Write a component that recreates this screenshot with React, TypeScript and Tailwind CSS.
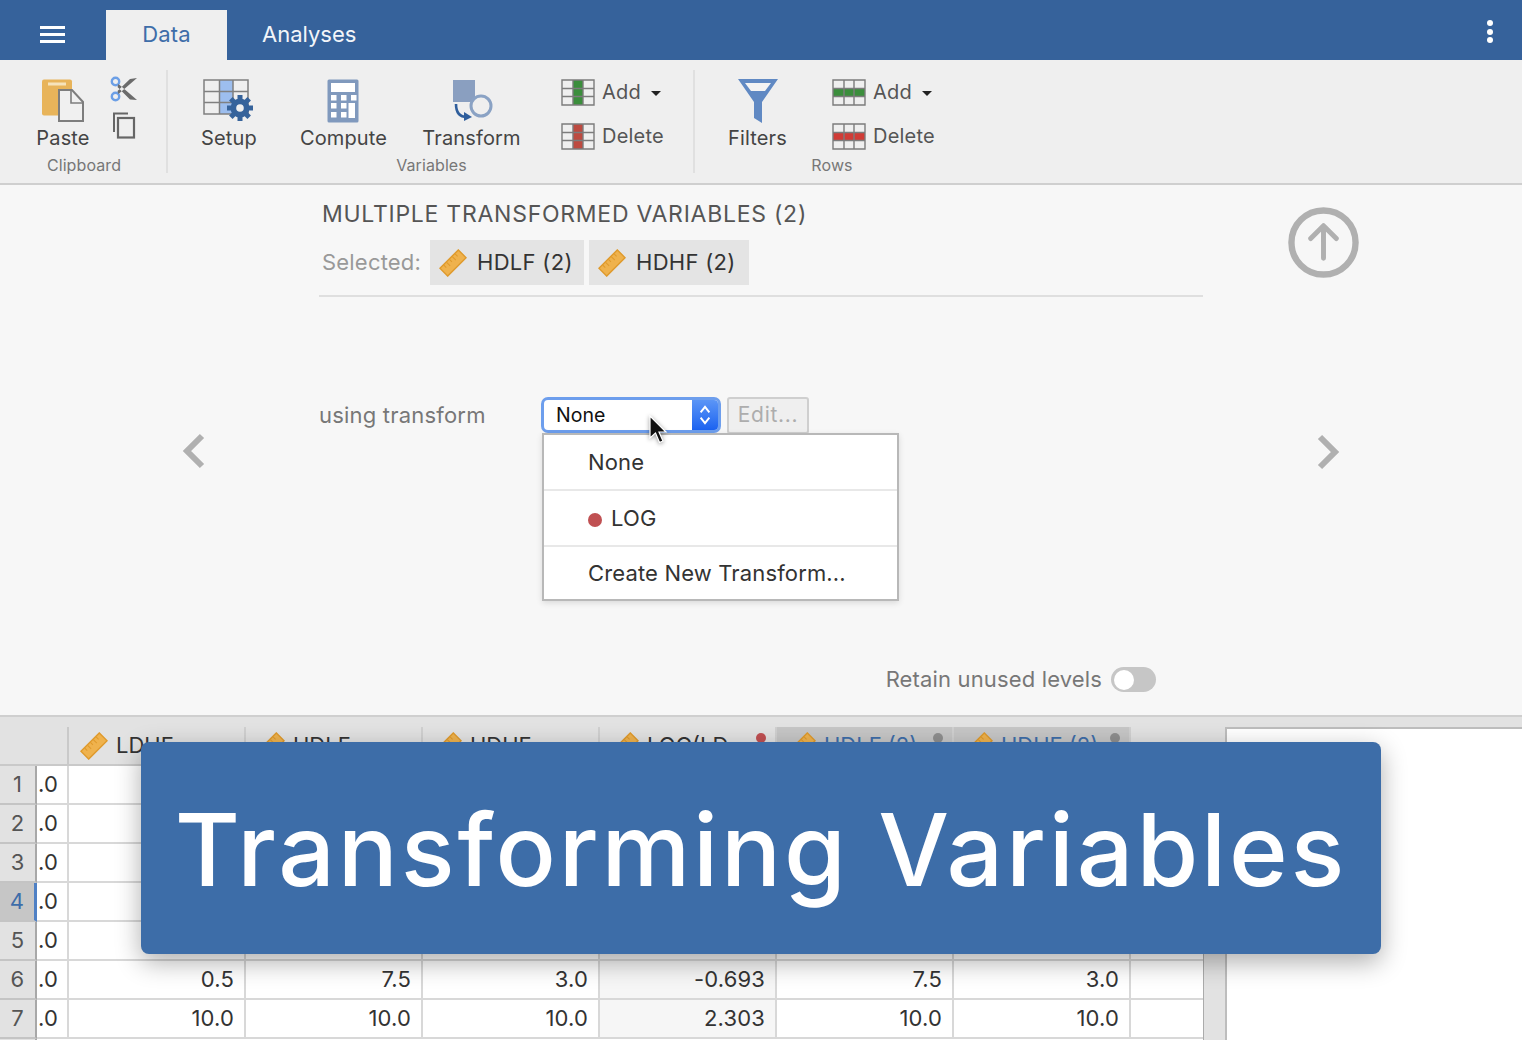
import React from "react";

const font = "[font-family:Inter,'Liberation_Sans',sans-serif]";

function Ruler({ className = "" }: { className?: string }) {
  return (
    <svg viewBox="0 0 28 28" className={className}>
      <g transform="rotate(-45 14 14)">
        <rect x="1" y="8.5" width="26" height="11" fill="#efb24d" stroke="#df9a2c" strokeWidth="1.4" />
        <path d="M6 9v3.5M10 9v5M14 9v3.5M18 9v5M22 9v3.5" stroke="#df9a2c" strokeWidth="1" fill="none" />
      </g>
    </svg>
  );
}

function PasteIcon() {
  return (
    <svg viewBox="0 0 44 44" className="w-[44px] h-[44px] ml-[1px]">
      <rect x="0" y="0.5" width="30" height="36" rx="2" fill="#e8b45a" />
      <rect x="6" y="3.5" width="18" height="3" fill="#f6e3bb" />
      <path d="M17 11h13l11 12v19H17z" fill="#f0f0f0" stroke="#7d7d7d" strokeWidth="2" />
      <path d="M29 11v13h12" fill="none" stroke="#7d7d7d" strokeWidth="1.6" />
    </svg>
  );
}

function CutIcon() {
  return (
    <svg viewBox="0 0 28 26" className="w-[28px] h-[26px]">
      <circle cx="5.5" cy="5.5" r="3.7" fill="none" stroke="#6c9fe6" strokeWidth="2.4" />
      <circle cx="5.5" cy="20.5" r="3.7" fill="none" stroke="#6c9fe6" strokeWidth="2.4" />
      <path d="M8.5 8 27 24l-7-.5L7.500 11zM8.500 18 27 2l-7 1L7.500 15z" fill="#6b6b6b" />
    </svg>
  );
}

function CopyIcon() {
  return (
    <svg viewBox="0 0 24 27" className="w-[24px] h-[27px]">
      <path d="M2 20V1.500h14" fill="none" stroke="#666" strokeWidth="2" />
      <rect x="6" y="6" width="16" height="19.500" fill="none" stroke="#666" strokeWidth="2.200" />
    </svg>
  );
}

function SetupIcon() {
  return (
    <svg viewBox="0 0 52 44" className="w-[52px] h-[44px]">
      <rect x="16.500" y="1" width="13.500" height="34" fill="#9dbeee" />
      <path d="M1 1h44v34H1zM1 12.500h44M1 23.500h44M16.500 1v34M30 1v34" fill="none" stroke="#808080" strokeWidth="1.500" />
      <g transform="translate(37 29)">
        <circle r="9.500" fill="#36639b" />
        {[0, 45, 90, 135, 180, 225, 270, 315].map((a) => (
          <rect key={a} x="-2.500" y="-13" width="5" height="6" fill="#36639b" transform={`rotate(${a})`} />
        ))}
        <circle r="3.800" fill="#efefef" />
      </g>
    </svg>
  );
}

function ComputeIcon() {
  return (
    <svg viewBox="0 0 32 44" className="w-[32px] h-[44px] -ml-[2px]">
      <rect x="0.500" y="0.500" width="31" height="43" rx="1.500" fill="#8099bd" />
      <rect x="4" y="4" width="24" height="9" fill="#fff" />
      {[4, 14, 24].flatMap((x, i) =>
        [16, 24, 33].filter((y) => !(i === 2 && y > 16)).map((y) => (
          <rect key={`${x}-${y}`} x={x} y={y} width="5.500" height="5.500" fill="#fff" />
        ))
      )}
      <rect x="21.500" y="24" width="6.500" height="15" fill="#fff" />
    </svg>
  );
}

function TransformIcon() {
  return (
    <svg viewBox="0 0 42 44" className="w-[42px] h-[44px] ml-[2px]">
      <path d="M1 1h22v19l-4.500 3H1z" fill="#8a9fc0" />
      <circle cx="29" cy="27" r="10" fill="none" stroke="#8aa2c4" strokeWidth="3" />
      <path d="M4 25c0 8 3 13 11 13" fill="none" stroke="#2f5e9c" strokeWidth="2.600" />
      <path d="M12 33l8 5-8 4z" fill="#2f5e9c" />
    </svg>
  );
}

function GridIcon({ color, mode }: { color: string; mode: "col" | "row" }) {
  return (
    <svg viewBox="0 0 34 27" className="w-[34px] h-[27px]">
      {mode === "col" ? (
        <rect x="12" y="1" width="10" height="25" fill={color} />
      ) : (
        <rect x="1" y="10" width="32" height="8" fill={color} />
      )}
      <path d="M1 1h32v25H1zM1 9.500h32M1 17.500h32M12 1v25M22 1v25" fill="none" stroke="#7c7c7c" strokeWidth="1.400" />
    </svg>
  );
}

function FilterIcon() {
  return (
    <svg viewBox="0 0 40 44" className="w-[40px] h-[44px]">
      <path d="M0 0h40L24 23v21l-8-5V23z" fill="#6089c3" />
      <path d="M7 4h26l-6 8H13z" fill="#f3f3f3" />
    </svg>
  );
}

function Caret() {
  return <span className="ml-[3px] mt-[1px] w-0 h-0 border-x-[5px] border-x-transparent border-t-[5px] border-t-[#222]" />;
}

function Big({ icon, label, width }: { icon: React.ReactNode; label: string; width: string }) {
  return (
    <div className={`${width} flex flex-col items-center`}>
      <div className="h-[44px] flex items-center justify-center">{icon}</div>
      <div className="mt-[3px] text-[20px] leading-[24px] tracking-[0.15px] text-[#444] whitespace-nowrap">{label}</div>
    </div>
  );
}

function Small({ icon, label, caret }: { icon: React.ReactNode; label: string; caret?: boolean }) {
  return (
    <div className="h-[27px] flex items-center gap-[7px]">
      {icon}
      <span className="text-[20px] leading-[24px] tracking-[0.2px] text-[#555] -mt-[1px]">{label}</span>
      {caret && <Caret />}
    </div>
  );
}

function GroupLabel({ children }: { children: string }) {
  return <div className="-mb-[2px] pl-[2px] text-center text-[16px] leading-[20px] tracking-[0.1px] text-[#777]">{children}</div>;
}

function Ribbon() {
  return (
    <div className="h-[125px] bg-[#efefef] border-b-2 border-[#cfcfcf] flex">
      <div className="w-[168px] h-[103px] mt-[10px] border-r-2 border-[#e0e0e0] flex flex-col justify-between">
        <div className="flex pl-[33px] pt-[9px]">
          <Big width="w-[60px]" icon={<PasteIcon />} label="Paste" />
          <div className="ml-[17px] -mt-[3px] flex flex-col gap-[10px] items-start">
            <CutIcon />
            <div className="ml-[2px]"><CopyIcon /></div>
          </div>
        </div>
        <GroupLabel>Clipboard</GroupLabel>
      </div>
      <div className="w-[527px] h-[103px] mt-[10px] border-r-2 border-[#e0e0e0] flex flex-col justify-between">
        <div className="flex pl-[33px] pt-[9px]">
          <Big width="w-[56px]" icon={<SetupIcon />} label="Setup" />
          <Big width="w-[87px] ml-[43px]" icon={<ComputeIcon />} label="Compute" />
          <Big width="w-[97px] ml-[36px]" icon={<TransformIcon />} label="Transform" />
          <div className="ml-[41px] flex flex-col gap-[17px]">
            <Small icon={<GridIcon color="#3b8e3c" mode="col" />} label="Add" caret />
            <Small icon={<GridIcon color="#bd4a40" mode="col" />} label="Delete" />
          </div>
        </div>
        <GroupLabel>Variables</GroupLabel>
      </div>
      <div className="w-[272px] h-[103px] mt-[10px] flex flex-col justify-between">
        <div className="flex pl-[33px] pt-[9px]">
          <Big width="w-[59px]" icon={<FilterIcon />} label="Filters" />
          <div className="ml-[45px] flex flex-col gap-[17px]">
            <Small icon={<GridIcon color="#3b8e3c" mode="row" />} label="Add" caret />
            <Small icon={<GridIcon color="#d03b36" mode="row" />} label="Delete" />
          </div>
        </div>
        <GroupLabel>Rows</GroupLabel>
      </div>
    </div>
  );
}

function Header() {
  return (
    <div className="h-[60px] bg-[#36629b] flex items-end">
      <div className="ml-[40px] mb-[17px] w-[25px] flex flex-col gap-[4px]">
        <div className="h-[3px] bg-white" />
        <div className="h-[3px] bg-white" />
        <div className="h-[3px] bg-white" />
      </div>
      <div className="ml-[41px] w-[121px] h-[50px] pb-[2px] bg-[#efefef] text-[#3e6da9] text-[22px] tracking-[0.1px] flex items-center justify-center">Data</div>
      <div className="ml-[35px] h-[50px] pb-[2px] text-[#f2f5f9] text-[22px] flex items-center">Analyses</div>
      <div className="ml-auto mr-[29px] mb-[17px] flex flex-col gap-[2.500px]">
        <div className="w-[6px] h-[6px] rounded-full bg-white" />
        <div className="w-[6px] h-[6px] rounded-full bg-white" />
        <div className="w-[6px] h-[6px] rounded-full bg-white" />
      </div>
    </div>
  );
}

function Chip({ label, w }: { label: string; w: string }) {
  return (
    <div className={`${w} h-[45px] bg-[#e4e4e4] flex items-center pl-[9px] gap-[10px] text-[22px] tracking-[0.3px] text-[#333]`}>
      <Ruler className="w-[28px] h-[28px] shrink-0" />
      <span>{label}</span>
    </div>
  );
}

function Cursor() {
  return (
    <svg viewBox="0 0 20 30" className="absolute left-[648px] top-[415px] w-[20px] h-[30px] drop-shadow-[0_1px_2px_rgba(0,0,0,0.4)] z-30">
      <path d="M2 1v22l5.500-5 4 9.500 3.500-1.500-4-9h7z" fill="#111" stroke="#fff" strokeWidth="1.200" />
    </svg>
  );
}

function Editor() {
  return (
    <div className="h-[530px] bg-[#f7f7f7] grid grid-cols-[319px_884px_319px]">
      <div className="flex items-start justify-end pr-[113px] pt-[248px]">
        <svg viewBox="0 0 24 36" className="w-[24px] h-[36px]">
          <path d="M20 3 5 18l15 15" fill="none" stroke="#b0b0b0" strokeWidth="6" />
        </svg>
      </div>
      <div className="flex flex-col">
        <div className="pl-[3px] pt-[13px] text-[23px] leading-[32px] tracking-[0.74px] text-[#555]">MULTIPLE TRANSFORMED VARIABLES (2)</div>
        <div className="mt-[10px] pl-[3px] flex items-center">
          <span className="text-[22px] tracking-[0.2px] text-[#999] w-[108px]">Selected:</span>
          <Chip label="HDLF (2)" w="w-[154px]" />
          <div className="w-[5px]" />
          <Chip label="HDHF (2)" w="w-[160px]" />
        </div>
        <div className="mt-[10px] h-[2px] bg-[#dfdfdf]" />
        <div className="mt-[99px] flex items-center h-[38px]">
          <span className="w-[222px] text-[22px] tracking-[0.2px] text-[#777]">using transform</span>
          <div className="w-[180px] h-[36px] rounded-[7px] border-[3px] border-[#6d9eed] bg-white flex items-stretch overflow-hidden">
            <span className="flex-1 pl-[12px] text-[19.500px] leading-[31px] text-[#111]">None</span>
            <div className="w-[26px] bg-gradient-to-b from-[#5b95f6] to-[#1b62f0] flex items-center justify-center">
              <svg viewBox="0 0 12 22" className="w-[14px] h-[24px]">
                <path d="M2 8.500 6 3.500l4 5M2 13.500l4 5 4-5" fill="none" stroke="#fff" strokeWidth="1.800" />
              </svg>
            </div>
          </div>
          <div className="ml-[6px] w-[82px] h-[37px] rounded-[3px] border-2 border-[#cfcfcf] bg-[#efefef] text-[21px] tracking-[0.7px] text-[#adadad] flex items-center justify-center">Edit...</div>
        </div>
        <div className="mt-[229px] flex items-center justify-end pr-[47px] gap-[9px]">
          <span className="text-[22px] tracking-[0.15px] text-[#777]">Retain unused levels</span>
          <div className="w-[45px] h-[25px] rounded-full bg-[#c6c6c6] flex items-center pl-[3px]">
            <div className="w-[20px] h-[20px] rounded-full bg-white" />
          </div>
        </div>
      </div>
      <div className="flex flex-col">
        <div className="pl-[85px] pt-[22px]">
          <svg viewBox="0 0 72 72" className="w-[71px] h-[71px]">
            <circle cx="36" cy="36" r="32.500" fill="none" stroke="#b0b0b0" strokeWidth="6.500" />
            <path d="M36 52V20M23 32l13-13 13 13" fill="none" stroke="#b0b0b0" strokeWidth="5" strokeLinecap="round" strokeLinejoin="round" />
          </svg>
        </div>
        <div className="pl-[113px] mt-[156px]">
          <svg viewBox="0 0 24 36" className="w-[24px] h-[36px]">
            <path d="M4 3l15 15L4 33" fill="none" stroke="#b0b0b0" strokeWidth="6" />
          </svg>
        </div>
      </div>
    </div>
  );
}

function Dropdown() {
  return (
    <div className="absolute left-[542px] top-[433px] w-[357px] h-[168px] bg-white border-2 border-[#b8b8b8] shadow-[0_2px_6px_rgba(0,0,0,0.12)] text-[22px] tracking-[0.15px] text-[#333] z-20 flex flex-col">
      <div className="h-[56px] flex items-center pl-[44px] border-b-2 border-[#e8e8e8]">None</div>
      <div className="h-[56px] flex items-center pl-[44px] border-b-2 border-[#e8e8e8]">
        <span className="w-[14px] h-[14px] rounded-full bg-[#c05052] mr-[9px] mt-[3px]" />LOG
      </div>
      <div className="flex-1 flex items-center pl-[44px]">Create New Transform...</div>
    </div>
  );
}

const columns = [
  { name: "LDHF" },
  { name: "HDLF" },
  { name: "HDHF" },
  { name: "LOG(LD", dot: "#c05052" },
  { name: "HDLF (2)", dot: "#8f8f8f", sel: true },
  { name: "HDHF (2)", dot: "#8f8f8f", sel: true },
];

const rows: string[][] = [
  ["", "", "", "", "", ""],
  ["", "", "", "", "", ""],
  ["", "", "", "", "", ""],
  ["", "", "", "", "", ""],
  ["", "", "", "", "", ""],
  ["0.5", "7.5", "3.0", "-0.693", "7.5", "3.0"],
  ["10.0", "10.0", "10.0", "2.303", "10.0", "10.0"],
];

function DataTable() {
  return (
    <div className="h-[325px] border-t-2 border-[#cfcfcf] bg-[#e2e2e2] flex overflow-hidden">
      <div className="w-[1203px] shrink-0 flex flex-col pt-[10px]">
        <div className="h-[39px] flex border-b-2 border-[#c9c9c9] shrink-0">
          <div className="w-[69px] border-r-2 border-[#c9c9c9]" />
          {columns.map((c) => (
            <div
              key={c.name}
              className={`w-[177px] relative flex items-center gap-[8px] pl-[11px] border-r-2 border-[#d0d0d0] overflow-hidden text-[22px] ${c.sel ? "bg-[#c6c6c6] text-[#3e6da9]" : "text-[#333]"}`}
            >
              <Ruler className="w-[28px] h-[28px] shrink-0" />
              <span className="whitespace-nowrap">{c.name}</span>
              {c.dot && <span className="absolute right-[9px] top-[6px] w-[10px] h-[10px] rounded-full" style={{ background: c.dot }} />}
            </div>
          ))}
        </div>
        {rows.map((r, i) => (
          <div key={i} className="h-[39px] flex shrink-0 text-[22px] tracking-[0.15px] text-[#333]">
            <div className={`w-[37px] shrink-0 flex items-center justify-center border-b-2 border-[#c4c4c4] ${i === 3 ? "bg-[#c6c6c6] text-[#3e6da9] border-r-[3px] border-r-[#4f80c4]" : "bg-[#e2e2e2] text-[#555] border-r-2 border-r-[#a8a8a8]"}`}>
              {i + 1}
            </div>
            <div className="w-[32px] shrink-0 bg-white border-r-2 border-b-2 border-[#d8d8d8] flex items-center pl-[1px]">.0</div>
            {r.map((v, j) => (
              <div key={j} className={`w-[177px] shrink-0 border-r-2 border-b-2 border-[#d8d8d8] flex items-center justify-end pr-[10px] ${j === 3 ? "bg-[#f6f6f6]" : "bg-white"}`}>
                {v}
              </div>
            ))}
            <div className="flex-1 bg-white border-b-2 border-[#d8d8d8]" />
          </div>
        ))}
        <div className="flex shrink-0 h-[10px]">
          <div className="w-[37px] shrink-0 border-r-2 border-r-[#a8a8a8]" />
          <div className="flex-1 bg-white" />
        </div>
      </div>
      <div className="w-[22px] shrink-0 mt-[49px] border-l border-[#ababab]" />
      <div className="flex-1 mt-[10px] bg-white border-l-2 border-t-2 border-[#bdbdbd]" />
    </div>
  );
}

export default function App() {
  return (
    <div className={`relative w-[1522px] h-[1040px] overflow-hidden bg-white ${font}`}>
      <Header />
      <Ribbon />
      <Editor />
      <DataTable />
      <Dropdown />
      <Cursor />
      <div className="absolute left-[141px] top-[742px] w-[1240px] h-[212px] rounded-[8px] bg-[#3d6da8] shadow-[0_8px_26px_rgba(0,0,0,0.32)] z-40 flex items-center justify-center text-white text-[100px] font-medium leading-none tracking-[2.8px] pt-[3px] whitespace-nowrap">
        Transforming Variables
      </div>
    </div>
  );
}
